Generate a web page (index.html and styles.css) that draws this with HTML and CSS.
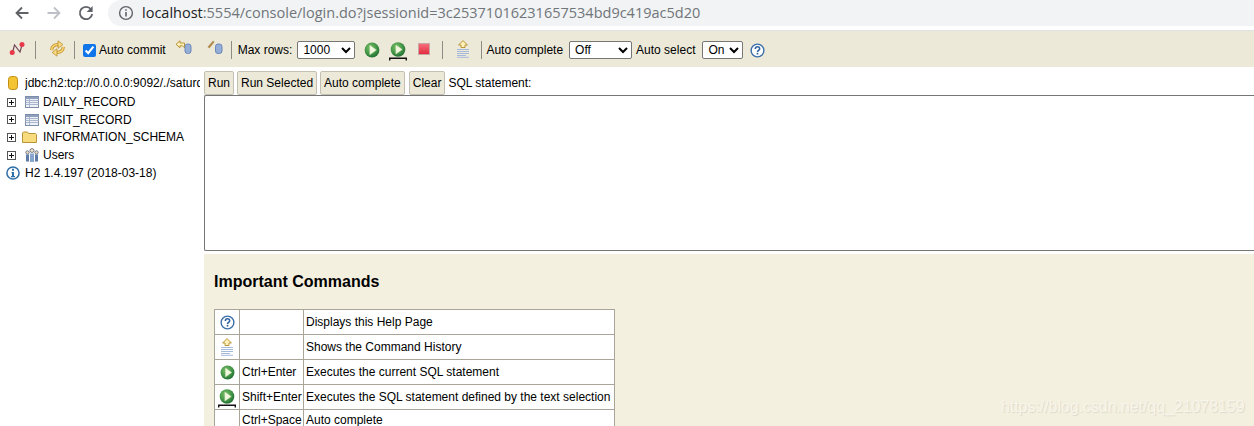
FILE: index.html
```html
<!DOCTYPE html>
<html lang="en">
<head>
<meta charset="utf-8">
<title>H2 Console</title>
<link rel="stylesheet" href="styles.css">
</head>
<body>
<svg class="defs" width="0" height="0" aria-hidden="true">
  <defs>
    <radialGradient id="g-play" cx="40%" cy="35%" r="70%">
      <stop offset="0" stop-color="#7cc36a"/>
      <stop offset=".65" stop-color="#3e9044"/>
      <stop offset="1" stop-color="#1f6a32"/>
    </radialGradient>
    <linearGradient id="g-stop" x1="0" y1="0" x2="0" y2="1">
      <stop offset="0" stop-color="#f7707c"/>
      <stop offset="1" stop-color="#df2a3c"/>
    </linearGradient>
    <symbol id="i-play" viewBox="0 0 16 16">
      <circle cx="8" cy="8" r="7.4" fill="url(#g-play)"/>
      <path d="M5.800 3.200 12.400 8l-6.600 4.800z" fill="#f3f7df" stroke="#cfe3b8" stroke-width=".5"/>
    </symbol>
    <symbol id="i-playsel" viewBox="0 0 18 19">
      <circle cx="9" cy="7.500" r="7.300" fill="url(#g-play)"/>
      <path d="M6.900 3 13.200 7.500 6.900 12z" fill="#f3f7df" stroke="#cfe3b8" stroke-width=".5"/>
      <path d="M.7 18.500v-2.300h16.600v2.300" fill="none" stroke="#111" stroke-width="1.400"/>
    </symbol>
    <symbol id="i-help" viewBox="0 0 16 16">
      <circle cx="8" cy="8" r="6.800" fill="#fff" stroke="#3a6ea8" stroke-width="1.500"/>
      <path d="M5.700 6.300c0-3 4.600-3 4.600-.2 0 1.800-2.300 1.700-2.300 3.400" fill="none" stroke="#2f62a0" stroke-width="1.700"/>
      <rect x="7.100" y="10.500" width="1.800" height="1.800" fill="#2f62a0"/>
    </symbol>
    <symbol id="i-history" viewBox="0 0 14 18">
      <path d="M7 .6 11.400 5H9V7.500H5V5H2.600z" fill="#fdf0b8" stroke="#b68a2a" stroke-width=".9"/>
      <path d="M1 9.500h12M1 11.500h12M1 13.500h12M1 15.500h9M1 17.300h12" stroke="#a5b9dc" stroke-width="1"/>
    </symbol>
    <symbol id="i-table" viewBox="0 0 14 12">
      <rect x=".5" y=".5" width="13" height="11" fill="#eef1f6" stroke="#7d8ca8"/>
      <path d="M.5 2h13" stroke="#8fa0be" stroke-width="2"/>
      <path d="M.5 4.500h13M.5 6.500h13M.5 8.500h13M4.500 3v8" stroke="#a9b6cd"/>
    </symbol>
    <symbol id="i-plus" viewBox="0 0 9 9">
      <rect x=".5" y=".5" width="8" height="8" fill="#fff" stroke="#555"/>
      <path d="M2 4.500h5M4.500 2v5" stroke="#111"/>
    </symbol>
  </defs>
</svg>

<header class="chrome">
  <div class="nav">
    <svg class="nav-icon" viewBox="0 0 16 16"><path d="M14.500 8H2.500M8 2.500 2.500 8 8 13.500" fill="none" stroke="#5f6368" stroke-width="1.800"/></svg>
    <svg class="nav-icon" viewBox="0 0 16 16"><path d="M1.500 8h12M8 2.500 13.500 8 8 13.500" fill="none" stroke="#bdc1c6" stroke-width="1.800"/></svg>
    <svg class="nav-icon" viewBox="0 0 16 16"><path d="M13 4.200A6.200 6.200 0 1 0 14.200 9" fill="none" stroke="#5f6368" stroke-width="1.800"/><path d="M14.600 1v6h-6z" fill="#5f6368"/></svg>
  </div>
  <div class="omnibox">
    <svg class="info" viewBox="0 0 16 16"><circle cx="8" cy="8" r="6.400" fill="none" stroke="#5f6368" stroke-width="1.400"/><path d="M7.200 7h1.600v4.600H7.200zM7.200 4.200h1.600v1.600H7.200z" fill="#5f6368"/></svg>
    <span class="url"><span class="host">localhost</span>:5554/console/login.do?jsessionid=3c25371016231657534bd9c419ac5d20</span>
  </div>
</header>

<div class="toolbar">
  <svg class="tool tool-first" viewBox="0 0 16 16"><path d="M3.500 11.500 5.500 4l5.500 7 2-7" fill="none" stroke="#6d3f52" stroke-width="1.100"/><circle cx="3.200" cy="11.500" r="2.500" fill="#e8384a"/><circle cx="13" cy="3.500" r="2.500" fill="#e8384a"/></svg>
  <span class="sep sep-a"></span>
  <svg class="tool tool-refresh" viewBox="0 0 16 16"><path d="M2.500 9.500c.3-3.500 2.500-5.200 6-5.200M13.500 6.500c-.3 3.500-2.500 5.200-6 5.200" fill="none" stroke="#c8932a" stroke-width="3"/><path d="M2.500 9.500c.3-3.500 2.500-5.200 6-5.200M13.500 6.500c-.3 3.500-2.500 5.200-6 5.200" fill="none" stroke="#f6d676" stroke-width="1.400"/><path d="M8.500.8l4.500 3.500-4.500 3.500zM7.500 8.200 3 11.700l4.500 3.500z" fill="#f8dc80" stroke="#b9872b" stroke-width=".7"/></svg>
  <span class="sep sep-b"></span>
  <label class="commit"><input class="check" type="checkbox" checked><span>Auto commit</span></label>
  <svg class="tool tool-rollback" viewBox="0 0 17 14"><path d="M5 .8 1 4.300 5 7.800V5.800h2.500L9.500 7.800V3H5z" fill="#fdf0b8" stroke="#b68a2a" stroke-width=".9"/><rect x="10" y="4" width="6" height="9.500" rx="2.500" fill="#94aed8" stroke="#6c88b8"/></svg>
  <svg class="tool tool-commit" viewBox="0 0 17 14"><path d="M1.500 7 7 .8l1.500 1.200L3.500 8.300z" fill="#b08a4e"/><rect x="9.500" y="4" width="6.500" height="9.500" rx="2.500" fill="#94aed8" stroke="#6c88b8"/></svg>
  <span class="sep sep-c"></span>
  <span class="label">Max rows:</span>
  <select class="select select-rows"><option>1000</option></select>
  <svg class="tool tool-run"><use href="#i-play"/></svg>
  <svg class="tool tool-runsel"><use href="#i-playsel"/></svg>
  <svg class="tool tool-stop" viewBox="0 0 12 12"><rect x=".5" y=".5" width="11" height="11" fill="url(#g-stop)" stroke="#c9a5a5"/></svg>
  <span class="sep sep-d"></span>
  <svg class="tool tool-hist"><use href="#i-history"/></svg>
  <span class="sep sep-e"></span>
  <span class="label">Auto complete</span>
  <select class="select select-complete"><option>Off</option></select>
  <span class="label">Auto select</span>
  <select class="select select-auto"><option>On</option></select>
  <svg class="tool tool-help"><use href="#i-help"/></svg>
</div>

<main class="workspace">
  <nav class="tree">
    <div class="tree-row tree-db">
      <svg class="db-icon" viewBox="0 0 10 14"><rect x=".5" y=".5" width="9" height="13" rx="3" fill="#f5c433" stroke="#c08d16"/></svg>
      <span class="db-url">jdbc:h2:tcp://0.0.0.0:9092/./saturday</span>
    </div>
    <div class="tree-row"><svg class="plus"><use href="#i-plus"/></svg><svg class="node-icon table-icon"><use href="#i-table"/></svg><span>DAILY_RECORD</span></div>
    <div class="tree-row"><svg class="plus"><use href="#i-plus"/></svg><svg class="node-icon table-icon"><use href="#i-table"/></svg><span>VISIT_RECORD</span></div>
    <div class="tree-row"><svg class="plus"><use href="#i-plus"/></svg><svg class="node-icon folder-icon" viewBox="0 0 15 12"><path d="M.5 11.500V2l1-1h4l1 1.500h7l1 1v8z" fill="#f8db7c" stroke="#b9953a"/></svg><span>INFORMATION_SCHEMA</span></div>
    <div class="tree-row"><svg class="plus"><use href="#i-plus"/></svg><svg class="node-icon users-icon" viewBox="0 0 14 14"><circle cx="2.500" cy="4.500" r="1.700" fill="#f2dcc0" stroke="#3f5478" stroke-width=".7"/><path d="M1 6.500h3v7H1z" fill="#5d7aa8"/><circle cx="11.500" cy="4.500" r="1.700" fill="#f2dcc0" stroke="#3f5478" stroke-width=".7"/><path d="M10 6.500h3v7h-3z" fill="#5d7aa8"/><circle cx="7" cy="2.500" r="2" fill="#f2dcc0" stroke="#3f5478" stroke-width=".7"/><path d="M5 5.500h4v8.500H5z" fill="#88a5cf"/></svg><span>Users</span></div>
    <div class="tree-row tree-version">
      <svg class="ver-icon" viewBox="0 0 14 14"><circle cx="7" cy="7" r="6.100" fill="#fff" stroke="#2f6fa8" stroke-width="1.500"/><path d="M6 2.800h2v2H6zM5.500 6H8v4h1v1.200H5V10h1V7.200h-.5z" fill="#2f6fa8"/></svg>
      <span>H2 1.4.197 (2018-03-18)</span>
    </div>
  </nav>

  <section class="editor">
    <div class="actions">
      <button class="btn" type="button">Run</button>
      <button class="btn" type="button">Run Selected</button>
      <button class="btn" type="button">Auto complete</button>
      <button class="btn" type="button">Clear</button>
      <span class="sql-label">SQL statement:</span>
    </div>
    <textarea class="sql" aria-label="SQL statement"></textarea>
    <div class="help">
      <h3 class="help-title">Important Commands</h3>
      <table class="cmds">
        <tr><td class="c-icon"><svg class="cell-icon"><use href="#i-help"/></svg></td><td class="c-key"></td><td class="c-desc">Displays this Help Page</td></tr>
        <tr><td class="c-icon"><svg class="cell-hist"><use href="#i-history"/></svg></td><td class="c-key"></td><td class="c-desc">Shows the Command History</td></tr>
        <tr><td class="c-icon"><svg class="cell-icon"><use href="#i-play"/></svg></td><td class="c-key">Ctrl+Enter</td><td class="c-desc">Executes the current SQL statement</td></tr>
        <tr><td class="c-icon"><svg class="cell-sel"><use href="#i-playsel"/></svg></td><td class="c-key">Shift+Enter</td><td class="c-desc">Executes the SQL statement defined by the text selection</td></tr>
        <tr class="row-last"><td class="c-icon"></td><td class="c-key">Ctrl+Space</td><td class="c-desc">Auto complete</td></tr>
      </table>
    </div>
  </section>
</main>

<div class="watermark">https://blog.csdn.net/qq_21078159</div>
</body>
</html>
```
FILE: styles.css
```css
* { box-sizing: border-box; }
html, body { margin: 0; padding: 0; height: 426px; overflow: hidden; background: #fff; }
body { position: relative; font: 12px/14px "Liberation Sans", Arial, sans-serif; color: #000; }
.defs { display: block; height: 0; }

.chrome { display: flex; align-items: flex-start; height: 31px; border-bottom: 1px solid #dfe1e5; background: #fff; }
.nav { display: flex; gap: 16px; padding: 5px 0 0 14px; width: 108px; flex: none; }
.nav-icon { width: 16px; height: 16px; flex: none; }
.omnibox { flex: 1; display: flex; align-items: center; height: 26px; padding-left: 10px; background: #f1f3f4; border-radius: 13px 0 0 13px; }
.info { width: 16px; height: 16px; flex: none; margin-right: 8px; }
.url { font: 14.500px/20px "Open Sans", sans-serif; color: #70757a; white-space: nowrap; }
.host { color: #202124; }

.toolbar { display: flex; align-items: center; height: 36px; padding-top: 2px; background: #ece9d8; }
.tool { display: block; flex: none; }
.sep { display: block; width: 1px; height: 18px; background: #8d8d86; flex: none; }
.label { flex: none; }
.tool-first { width: 16px; height: 16px; margin-left: 9px; margin-top: -3px; }
.sep-a { margin-left: 10px; }
.tool-refresh { width: 17px; height: 17px; margin-left: 13px; margin-top: -3px; }
.sep-b { margin-left: 8px; }
.commit { display: flex; align-items: center; margin-left: 8px; }
.check { width: 13px; height: 13px; margin: 0 3px 0 0; accent-color: #0f75e8; }
.tool-rollback { width: 17px; height: 14px; margin-left: 9px; margin-top: -6px; }
.tool-commit { width: 17px; height: 14px; margin-left: 14px; margin-top: -6px; }
.sep-c { margin-left: 8px; }
.sep-c + .label { margin-left: 6px; }
.select { font: 12px "Liberation Sans", Arial, sans-serif; height: 18px; margin: 0; padding: 0 0 0 1px; background: #fff; border: 1px solid #767676; border-radius: 2px; color: #000; }
.select-rows { width: 58px; margin-left: 5px; }
.tool-run { width: 16px; height: 16px; margin-left: 9px; }
.tool-runsel { width: 18px; height: 19px; margin-left: 9px; margin-top: 3px; }
.tool-stop { width: 12px; height: 12px; margin-left: 11px; margin-top: -2px; }
.sep-d { margin-left: 12px; }
.tool-hist { width: 14px; height: 18px; margin-left: 13px; margin-top: -2px; }
.sep-e { margin-left: 11px; }
.sep-e + .label { margin-left: 4px; }
.select-complete { width: 63px; margin-left: 6px; margin-right: 4px; }
.select-auto { width: 41px; margin-left: 7px; }
.tool-help { width: 15px; height: 15px; margin-left: 7px; }

.workspace { display: flex; align-items: flex-start; height: 359px; }
.tree { width: 204px; flex: none; padding-top: 7px; overflow: hidden; }
.tree-row { display: flex; align-items: center; height: 17.700px; white-space: nowrap; }
.tree-db { padding-left: 8px; margin-bottom: 1.500px; }
.db-icon { width: 10px; height: 14px; flex: none; margin-right: 7px; }
.db-url { width: 175px; overflow: hidden; }
.plus { width: 9px; height: 9px; margin-left: 7px; flex: none; }
.node-icon { flex: none; }
.table-icon { width: 14px; height: 12px; margin: 0 4px 0 9px; }
.folder-icon { width: 15px; height: 12px; margin: 0 6px 0 6px; }
.users-icon { width: 14px; height: 14px; margin: 0 4px 0 9px; }
.tree-version { padding-left: 6px; }
.ver-icon { width: 14px; height: 14px; flex: none; margin-right: 5px; }

.editor { flex: 1; min-width: 0; }
.actions { display: flex; align-items: center; gap: 3px; height: 28px; padding-top: 4px; }
.btn { font: 12px "Liberation Sans", Arial, sans-serif; height: 24px; padding: 0 3px; margin: 0; color: #000; background: #ece9d8; border: 1px solid #c3c0b3; border-radius: 2px; }
.btn:nth-child(4) { margin-left: 1px; }
.sql { display: block; width: 1060px; height: 156px; margin: 0 0 3px; padding: 2px; border: 1px solid #767676; border-radius: 2px 0 0 2px; border-right: 0; resize: none; background: #fff; }
.help { height: 200px; padding: 18px 10px; background: #f4f0e0; overflow: hidden; }
.help-title { margin: 0 0 17px; font: bold 16px/20px "Liberation Sans", Arial, sans-serif; }
.cmds { border-collapse: collapse; background: #fff; table-layout: fixed; width: 400px; }
.cmds td { height: 25px; padding: 0 2px; border: 1px solid #a9a699; white-space: nowrap; vertical-align: middle; }
.c-icon { width: 25px; text-align: center; }
.c-key { width: 64px; }
.c-desc { width: 311px; }
.cmds .row-last td { height: 21px; }
.cell-icon { display: block; width: 15px; height: 15px; margin: 0 auto; }
.cell-hist { display: block; width: 14px; height: 18px; margin: 0 auto; }
.cell-sel { display: block; width: 18px; height: 19px; margin: 2px auto 0; }

.watermark { position: absolute; left: 1001px; top: 397px; font: 16px/20px "Liberation Sans", Arial, sans-serif; letter-spacing: -.06px; color: #f8f5ea; text-shadow: 1px 1px 1px #ddd9ca; white-space: nowrap; }
```
